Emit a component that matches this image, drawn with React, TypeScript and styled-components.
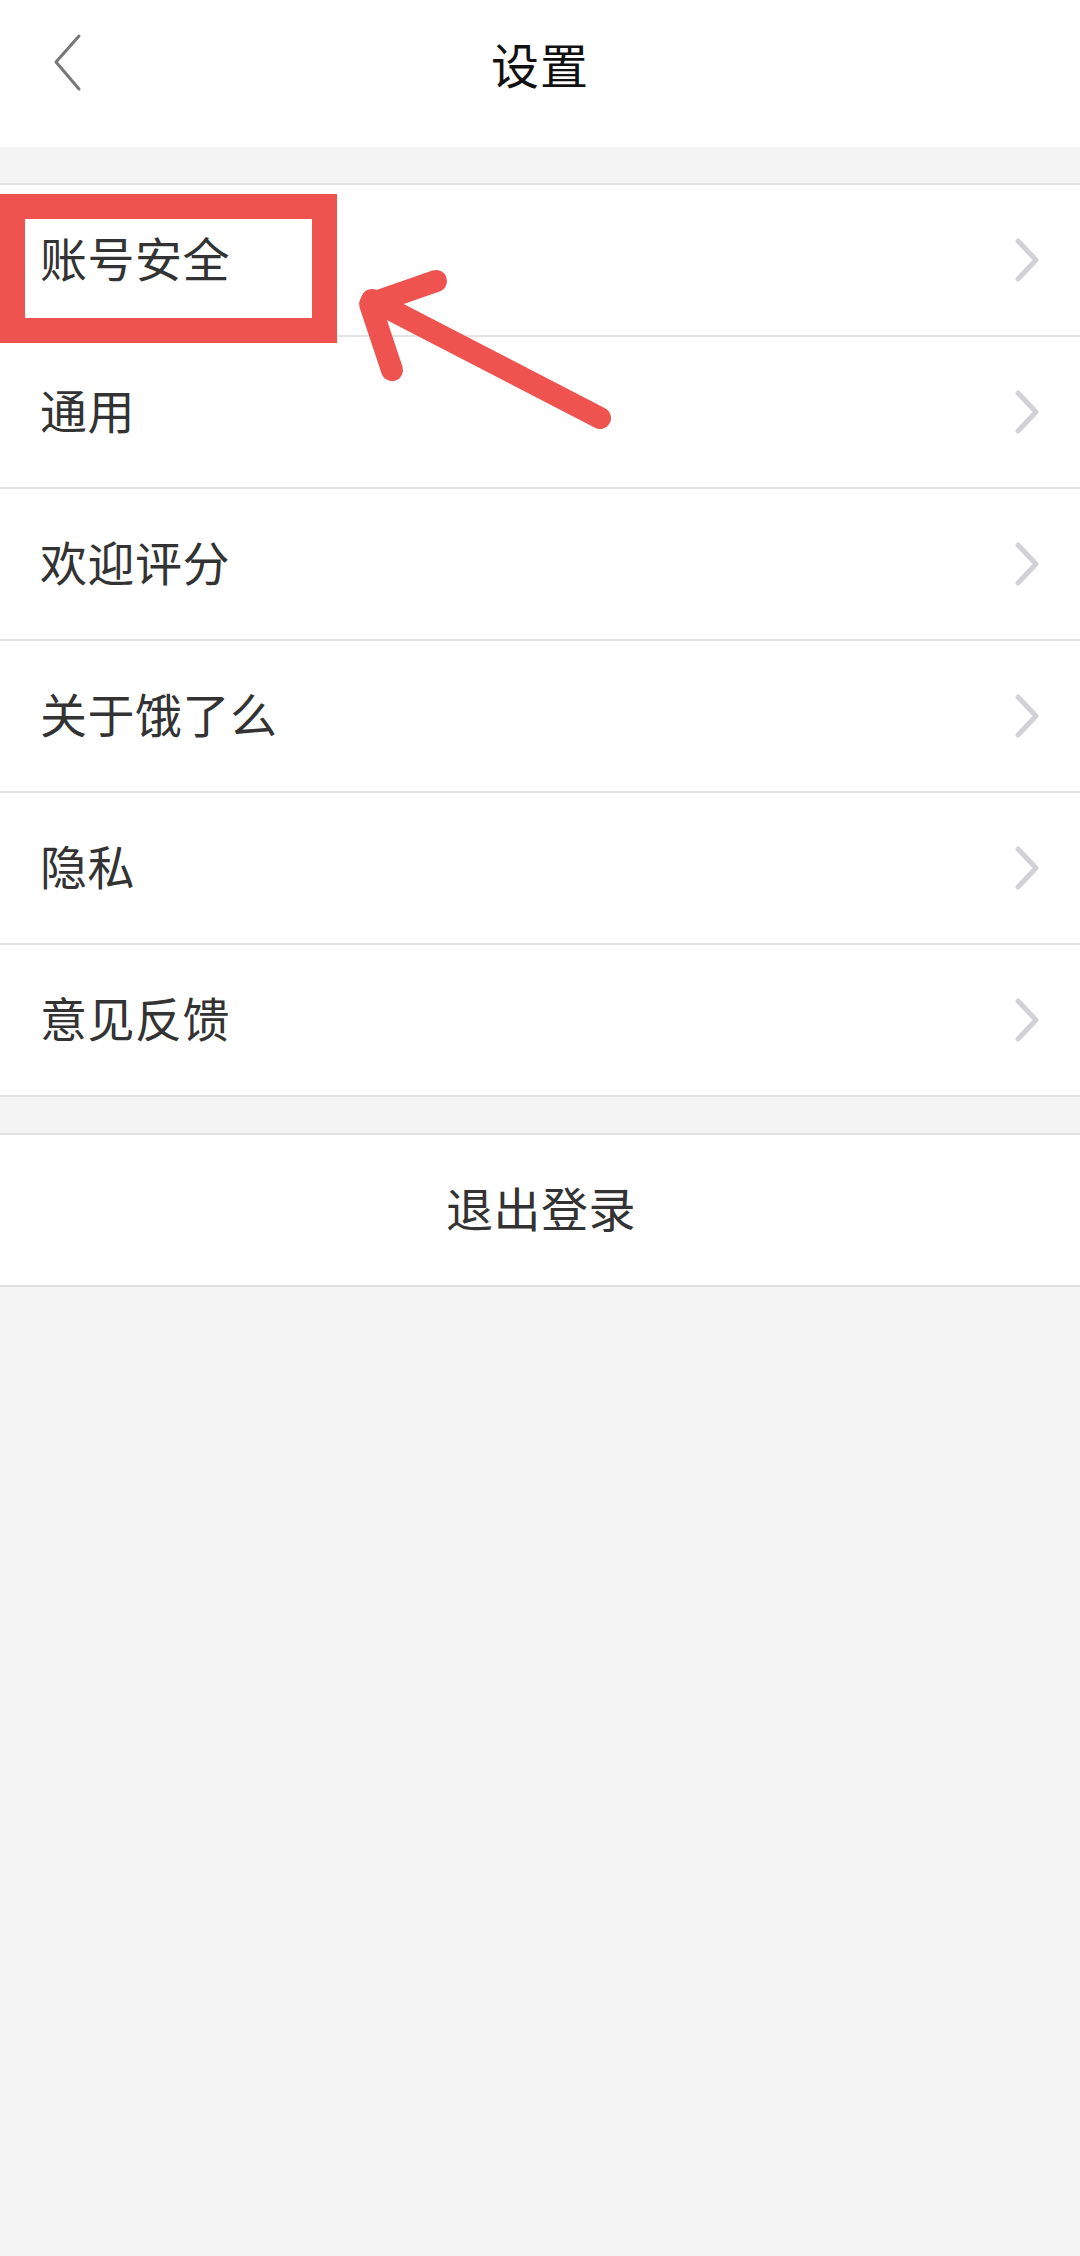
import styled, { createGlobalStyle } from 'styled-components';

const GlobalStyle = createGlobalStyle`
	html, body {
		margin: 0;
		padding: 0;
		background: #f4f4f4;
	}
	body {
		font-family: 'Noto Sans CJK SC', 'Noto Sans', sans-serif;
	}
`;

const Page = styled.div`
	position: relative;
	width: 1080px;
	min-height: 2256px;
	background: #f4f4f4;
`;

const Header = styled.header`
	display: grid;
	grid-template-columns: 1fr auto 1fr;
	align-items: center;
	box-sizing: border-box;
	height: 147px;
	padding-bottom: 22px;
	background: #fff;
`;

const BackButton = styled.button`
	justify-self: start;
	display: flex;
	align-items: center;
	margin-left: 46px;
	padding: 0;
	border: 0;
	background: none;
	cursor: pointer;
`;

const Title = styled.h1`
	margin: 0;
	font-size: 48px;
	font-weight: 400;
	color: #111;
	letter-spacing: 1px;
`;

const Group = styled.ul<{ gap: number }>`
	list-style: none;
	margin: ${({ gap }) => gap}px 0 0;
	padding: 0;
	background: #fff;
	border-top: 2px solid #e3e3e3;
`;

const Row = styled.li<{ center?: boolean }>`
	display: flex;
	align-items: center;
	justify-content: ${({ center }) => (center ? 'center' : 'space-between')};
	height: 150px;
	padding: 0 38px 0 40px;
	border-bottom: 2px solid #e3e3e3;
	font-size: 47px;
	color: #333;
	letter-spacing: 0.5px;
`;

const Label = styled.span`
	margin-bottom: 7px;
`;

const Chevron = () => (
	<svg width='30' height='48' viewBox='0 0 30 48'>
		<path
			d='M6 5 L24 24 L6 43'
			fill='none'
			stroke='#d2d2d6'
			strokeWidth='5'
			strokeLinecap='round'
			strokeLinejoin='round'
		/>
	</svg>
);

// red annotation drawn over the first row
const Marker = styled.div`
	position: absolute;
	left: 0;
	top: 194px;
	width: 337px;
	height: 149px;
	box-sizing: border-box;
	border: 25px solid #ef5350;
	pointer-events: none;
`;

const Arrow = styled.svg`
	position: absolute;
	left: 0;
	top: 0;
	pointer-events: none;
`;

const items = ['账号安全', '通用', '欢迎评分', '关于饿了么', '隐私', '意见反馈'];

const App = () => {
	return (
		<Page>
			<GlobalStyle />
			<Header>
				<BackButton aria-label='返回'>
					<svg width='40' height='60' viewBox='0 0 40 60'>
						<path
							d='M33 3 L10 29 L33 56'
							fill='none'
							stroke='#777'
							strokeWidth='3'
							strokeLinecap='round'
							strokeLinejoin='round'
						/>
					</svg>
				</BackButton>
				<Title>设置</Title>
				<span />
			</Header>

			<Group gap={36}>
				{items.map((item) => (
					<Row key={item}>
						<Label>{item}</Label>
						<Chevron />
					</Row>
				))}
			</Group>

			<Group gap={36}>
				<Row center>
					<Label>退出登录</Label>
				</Row>
			</Group>

			<Marker />
			<Arrow width='1080' height='500' viewBox='0 0 1080 500'>
				<g
					fill='none'
					stroke='#ef5350'
					strokeWidth='22'
					strokeLinecap='round'
					strokeLinejoin='round'
				>
					<path d='M600 418 L372 300' />
					<path d='M436 281 L370 304 L392 370' />
				</g>
			</Arrow>
		</Page>
	);
};

export default App;
